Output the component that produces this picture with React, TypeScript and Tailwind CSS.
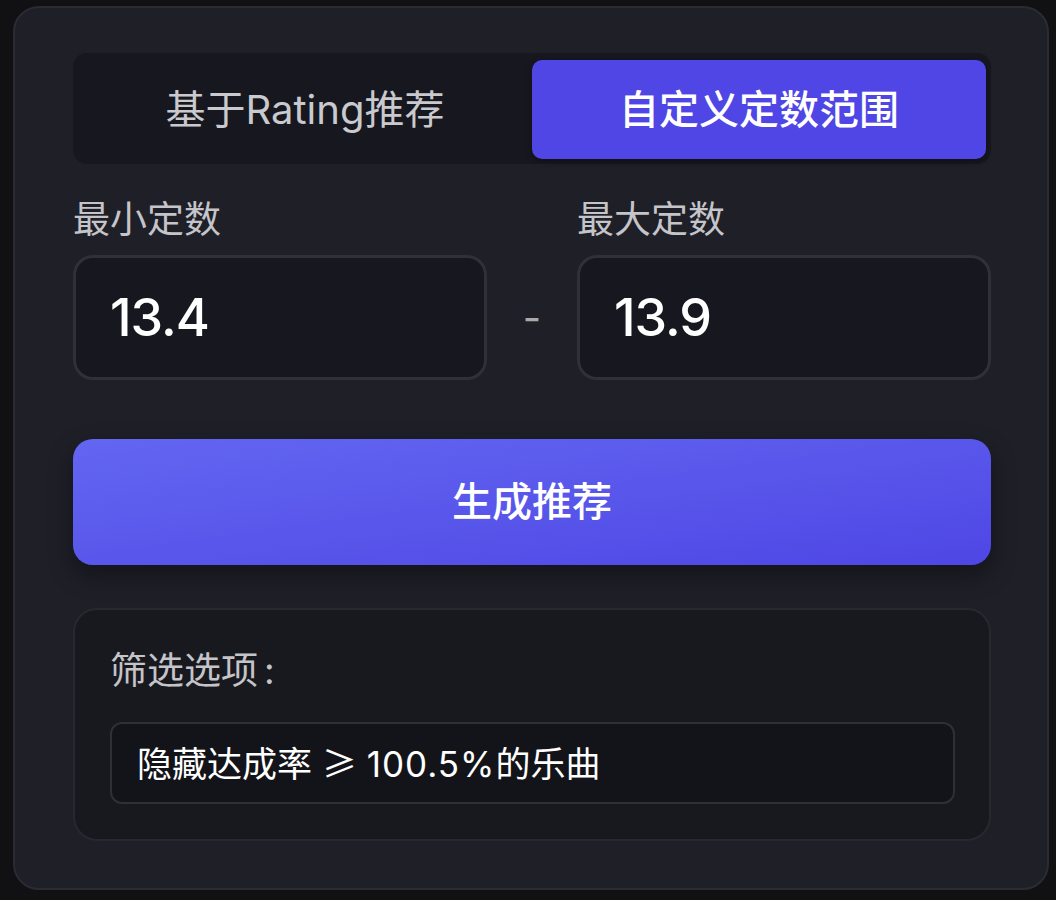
import React from "react";

export default function App() {
  const font = { fontFamily: 'Inter, "Noto Sans CJK SC", sans-serif' };
  return (
    <div className="min-h-[900px] w-[1056px] bg-[#111114] pt-[6px] pl-[13px] pr-[7px]" style={font}>
      <div className="rounded-[26px] border-2 border-[#2a2b33] bg-[#1e1f27] pl-[58px] pr-[56px] pt-[45px] pb-[47px]">
        {/* Tabs */}
        <div className="flex h-[111px] rounded-[14px] bg-[#17181f] pt-[7px] pb-[5px] px-[5px]">
          <div className="flex flex-1 items-center justify-center text-[40px] text-[#c9c9ce]">
            基于Rating推荐
          </div>
          <div className="flex flex-1 items-center justify-center rounded-[10px] bg-[#4f46e5] text-[40px] font-medium text-white shadow-[0_2px_6px_rgba(0,0,0,0.4)]">
            自定义定数范围
          </div>
        </div>

        {/* Inputs */}
        <div className="mt-[34px] flex items-end">
          <div className="flex flex-1 flex-col">
            <div className="text-[37px] leading-[44px] text-[#c4c4c9]">最小定数</div>
            <div className="mt-[13px] flex h-[125px] items-center rounded-[20px] border-[3px] border-[#2f3038] bg-[#17181f] pl-[34px] text-[52px] font-medium tracking-[-1px] text-white">
              13.4
            </div>
          </div>
          <div className="flex h-[125px] w-[90px] items-center justify-center text-[40px] text-[#a9a9ae]">-</div>
          <div className="flex flex-1 flex-col">
            <div className="text-[37px] leading-[44px] text-[#c4c4c9]">最大定数</div>
            <div className="mt-[13px] flex h-[125px] items-center rounded-[20px] border-[3px] border-[#2f3038] bg-[#17181f] pl-[34px] text-[52px] font-medium tracking-[-1px] text-white">
              13.9
            </div>
          </div>
        </div>

        {/* Button */}
        <div className="mt-[59px] flex h-[126px] items-center justify-center rounded-[20px] bg-gradient-to-br from-[#6366f1] to-[#4f46e5] text-[40px] font-medium text-white shadow-[0_10px_25px_rgba(0,0,0,0.35)]">
          生成推荐
        </div>

        {/* Filter */}
        <div className="mt-[43px] rounded-[24px] border-2 border-[#272830] bg-[#18191f] pl-[35px] pr-[34px] pt-[33px] pb-[35px]">
          <div className="text-[37px] leading-[56px] text-[#c4c4c9]">
            筛选选项<span className="ml-[6px]">:</span>
          </div>
          <div className="mt-[23px] flex h-[82px] items-center rounded-[12px] border-2 border-[#2e2f37] bg-[#131419] pl-[25px] text-[35px] text-white">
            <span>
              隐藏达成率 <span style={{ fontFamily: '"Noto Sans CJK SC", sans-serif' }}>≥</span>{" "}
              <span className="tracking-[1px]">100.5%</span>的乐曲
            </span>
          </div>
        </div>
      </div>
    </div>
  );
}
